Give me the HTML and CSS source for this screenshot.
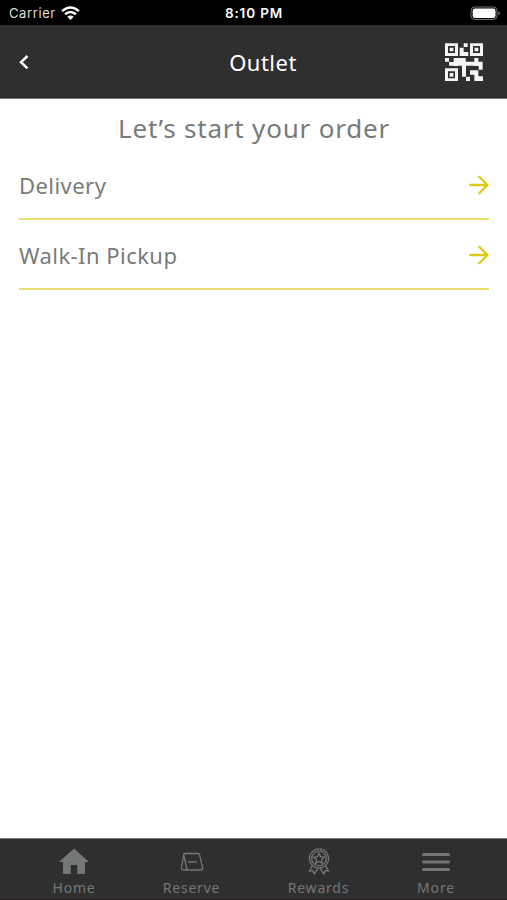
FILE: index.html
```html
<!DOCTYPE html>
<html lang="en">
<head>
<meta charset="utf-8">
<meta name="viewport" content="width=device-width">
<title>Outlet</title>
<link rel="stylesheet" href="styles.css">
</head>
<body>
<div class="status">
  <div class="carrier"><span>Carrier</span>
    <svg width="19" height="15" viewBox="0 0 19 15" fill="none" stroke="#fff" stroke-width="2.5"><path d="M1.1 5.1Q9.5-2 17.9 5.1M4.1 8.3Q9.5 3.8 14.9 8.3"/><path d="M6.3 10.8Q9.5 8.1 12.7 10.8L9.5 14Z" fill="#fff" stroke="none"/></svg>
  </div>
  <time>8:10 PM</time>
  <svg class="battery" width="31" height="15" viewBox="0 0 31 15"><rect x="1" y="1" width="26" height="12.5" rx="3.8" fill="none" stroke="#777"/><rect x="2.7" y="2.5" width="22.8" height="9.5" rx="2.2" fill="#fff"/><path d="M28.4 5v4.5q3-2.2 0-4.5" fill="#777"/></svg>
</div>
<header class="header">
  <svg class="back" width="12" height="16" viewBox="0 0 12 16" fill="none" stroke="#fff" stroke-width="2.5"><path d="M9.5 2L3 8.2l6.5 6.2"/></svg>
  <h1>Outlet</h1>
  <svg class="qr" width="38" height="38" viewBox="0 0 114 114" fill="#f4f4f4"><path fill-rule="evenodd" d="M0 1h39v38H0zM9 9v21h21V9zM75 1h39v38H75zM84 9v21h21V9zM0 76h39v38H0zM9 85v21h21V85z"/><path d="M14 14h11v11H14zM89 14h11v11H89zM14 90h11v11H14zM56 1h12v11H56zM44 14h12v13h14v12H44zM0 45h12v11H0zM12 57h12v11H12zM26 45h36v11h26v-11h12v11h13v24h-12V68H63v33H51V68H38V57H26zM24 57h14v12H24zM88 57h13v12H88zM75 82h25v18h14v14H88v-19H75zM63 101h12v13H63z"/></svg>
</header>
<main>
  <h2>Let’s start your order</h2>
  <ul>
    <li><span>Delivery</span><svg width="20" height="20" viewBox="0 0 20 20"><path d="M1.200 10h17M10.200 1.800l8.200 8.200-8.200 8.200"/></svg></li>
    <li><span>Walk-In Pickup</span><svg width="20" height="20" viewBox="0 0 20 20"><path d="M1.200 10h17M10.200 1.800l8.200 8.200-8.200 8.200"/></svg></li>
  </ul>
</main>
<nav>
  <a><svg width="32" height="30" viewBox="0 0 32 30"><path fill="#737777" d="M16 1.500L31 15h-4v12h-7.700v-9h-6.600v9H5V15H1z"/></svg><span>Home</span></a>
  <a><svg width="32" height="30" viewBox="0 0 32 30" fill="none" stroke="#737777" stroke-width="1.300" stroke-linejoin="round"><path d="M8.500 6.500H22q1.300 0 1.600 1.300L26.700 21.500q.2 1.500-1.700 1.500H12.500q-1.500 0-1.800-1.500L7.700 8q-.2-1.500.8-1.500M7.700 7.500L5.400 21.500q0 1.500 1.500 1.500h5M12 15h9"/></svg><span>Reserve</span></a>
  <a><svg width="32" height="30" viewBox="0 0 32 30" fill="none" stroke="#737777" stroke-width="1.300"><circle cx="16" cy="11.500" r="9.500" stroke-width="1.500" stroke-dasharray="2.600 .4"/><circle cx="16" cy="11.500" r="7.300"/><path d="M16 6.200l1.600 3.400 3.700.5-2.700 2.500.7 3.700-3.300-1.800-3.300 1.800.7-3.700-2.700-2.500 3.700-.5zM9.400 18.700L6.500 24l3.300-.3 1.500 3.100 3.800-6M22.600 18.700l2.900 5.300-3.300-.3-1.500 3.100-3.800-6"/></svg><span>Rewards</span></a>
  <a><svg width="32" height="30" viewBox="0 0 32 30" fill="none" stroke="#737777" stroke-width="3" stroke-linecap="round"><path d="M3.500 7.400h25M3.500 15h25M3.500 22.600h25"/></svg><span>More</span></a>
</nav>
</body>
</html>
```
FILE: styles.css
```css
* { box-sizing: border-box; }
body { margin: 0; height: 900px; display: flex; flex-direction: column; background: #fff; color: #777b7a; font-family: "Noto Sans", sans-serif; overflow: hidden; }
h1, h2, ul { margin: 0; padding: 0; font-weight: 400; }
svg { display: block; flex: none; }
.status { height: 25px; display: grid; grid-template-columns: 1fr auto 1fr; align-items: center; padding: 1px 6px 0 9px; background: #000; color: #fff; font-family: Inter, sans-serif; font-size: 13px; }
.carrier { display: flex; align-items: center; gap: 5px; color: #ddd; letter-spacing: .6px; }
.status time { font-size: 13.5px; font-weight: 600; letter-spacing: .85px; margin-left: -2px; }
.battery { justify-self: end; }
.header { height: 74px; display: grid; grid-template-columns: 38px 1fr 38px; align-items: center; padding: 0 24px 0 18px; background: #2f2f2f; border-bottom: 1px solid #777; color: #fff; }
h1 { font-size: 22px; letter-spacing: .5px; text-align: center; line-height: 30px; padding-left: 25px; }
main { flex: 1; padding: 0 18px 0 19px; }
h2 { height: 51px; line-height: 58px; font-size: 26px; letter-spacing: .8px; text-align: center; }
ul { list-style: none; }
li { height: 70px; display: flex; align-items: center; justify-content: space-between; border-bottom: 2px solid #e7dc6e; padding-top: 2px; font-size: 22px; letter-spacing: .45px; }
li svg { fill: none; stroke: #dccb14; stroke-width: 2.3; stroke-linecap: round; stroke-linejoin: round; }
nav { height: 62px; display: grid; grid-template-columns: 132px 103px 151px 84px; padding: 8px 0 0 8px; background: #2f2f2f; border-top: 1px solid #777; border-bottom: 1px solid #2c2026; }
nav a { display: flex; flex-direction: column; align-items: center; color: #737777; font-size: 14px; line-height: 20px; letter-spacing: .8px; }
nav span { margin-top: 1px; }
```
